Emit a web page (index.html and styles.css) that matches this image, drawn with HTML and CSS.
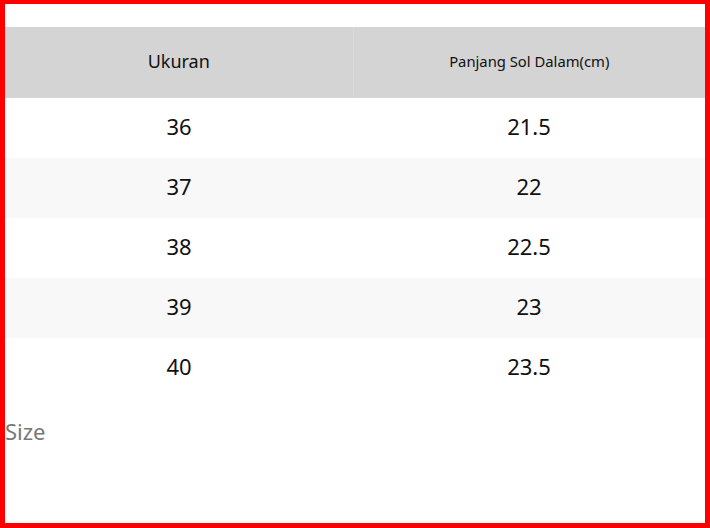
FILE: index.html
```html
<!DOCTYPE html>
<html>
<head>
<meta charset="utf-8">
<link rel="stylesheet" href="styles.css">
</head>
<body>
<div class="frame">
  <table class="size-table">
    <thead>
      <tr>
        <th class="col-size">Ukuran</th>
        <th class="col-len">Panjang Sol Dalam(cm)</th>
      </tr>
    </thead>
    <tbody>
      <tr><td>36</td><td>21.5</td></tr>
      <tr><td>37</td><td>22</td></tr>
      <tr><td>38</td><td>22.5</td></tr>
      <tr><td>39</td><td>23</td></tr>
      <tr><td>40</td><td>23.5</td></tr>
    </tbody>
  </table>
  <p class="caption">Size</p>
</div>
</body>
</html>
```
FILE: styles.css
```css
html, body {
  margin: 0;
  padding: 0;
  background: #fff;
}
.frame {
  box-sizing: border-box;
  width: 710px;
  height: 528px;
  border: 5px solid #ff0000;
  border-top-width: 4px;
  padding-top: 23px;
  font-family: "Noto Sans", "Open Sans", sans-serif;
  color: #111;
  overflow: hidden;
}
.size-table {
  width: 700px;
  border-collapse: collapse;
  table-layout: fixed;
}
.size-table th {
  background: #d4d4d4;
  height: 71px;
  padding: 0 0 4px 0;
  box-sizing: border-box;
  font-weight: 400;
  text-align: center;
  vertical-align: middle;
}
.col-size {
  width: 348px;
  font-size: 18px;
  border-right: 1px solid #dadada;
}
.col-len {
  font-size: 14.8px;
}
.size-table td {
  height: 60px;
  box-sizing: border-box;
  padding: 0 0 5px 0;
  text-align: center;
  vertical-align: middle;
  font-size: 22px;
}
.size-table tbody tr:nth-child(even) td {
  background: #f8f8f8;
}
.caption {
  margin: 18px 0 0 0;
  font-size: 22px;
  line-height: 30px;
  color: #777;
}
```
